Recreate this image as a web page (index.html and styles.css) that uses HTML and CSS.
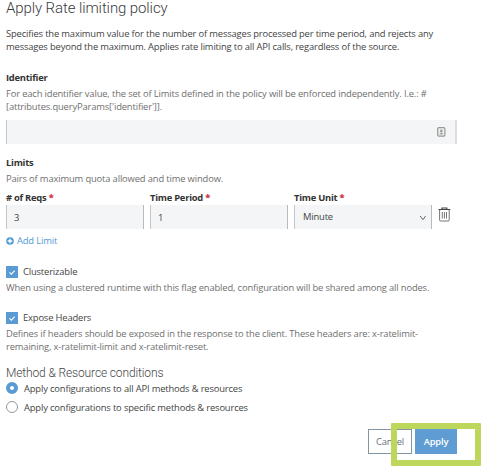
FILE: index.html
```html
<!DOCTYPE html>
<html lang="en">
<head>
<meta charset="utf-8">
<title>Apply Rate limiting policy</title>
<link rel="stylesheet" href="styles.css">
</head>
<body>
<main class="policy">
  <h1 class="title"><span>Apply Rate limiting policy</span></h1>
  <p class="intro">Specifies the maximum value for the number of messages processed per time period, and rejects any<br>messages beyond the maximum. Applies rate limiting to all API calls, regardless of the source.</p>

  <section class="identifier">
    <h2 class="label">Identifier</h2>
    <p class="help">For each identifier value, the set of Limits defined in the policy will be enforced independently. I.e.: #<br>[attributes.queryParams['identifier']].</p>
    <div class="field field-wide">
      <svg class="autofill" viewBox="0 0 9 10"><rect x=".7" y=".7" width="7.2" height="8.4" rx="1" fill="#eee" stroke="#999" stroke-width="1.2"/><path d="M4.3 2.5v3M3 4h2.6M2.7 6.8h3.2" stroke="#888" fill="none"/></svg>
    </div>
  </section>

  <section class="limits">
    <h2 class="label">Limits</h2>
    <p class="help">Pairs of maximum quota allowed and time window.</p>
    <div class="columns">
      <div class="column"><div class="label"># of Reqs <b class="required">*</b></div><div class="field">3</div></div>
      <div class="column"><div class="label">Time Period <b class="required">*</b></div><div class="field">1</div></div>
      <div class="column"><div class="label">Time Unit <b class="required">*</b></div><div class="field select">Minute<svg class="chevron" viewBox="0 0 8 6"><path d="M1.2 1l2.7 3.7L6.6 1" fill="none" stroke="#666" stroke-width="1"/></svg></div></div>
      <svg class="trash" viewBox="0 0 13 16"><path d="M.5 2.5h11.8M4 2V1h4.8v1" fill="none" stroke="#444" stroke-width="1.2"/><path d="M1.6 3v10.1q0 .9.9.9h7.8q.9 0 .9-.9V3M4.3 5v6.5M6.4 5v6.5M8.5 5v6.5" fill="none" stroke="#666" stroke-width=".9"/></svg>
    </div>
    <div class="add"><svg class="plus" viewBox="0 0 8 8"><circle cx="4" cy="4" r="3.8" fill="#4f9bd5"/><path d="M4 1.7v4.6M1.7 4h4.6" stroke="#fff" stroke-width="1.4"/></svg><span>Add Limit</span></div>
  </section>

  <section class="option clusterizable">
    <div class="check"><svg class="box" viewBox="0 0 12 12"><path d="M3.5 6.4l1.8 1.8 3.4-3.5" fill="none" stroke="#fff" stroke-width="1.1"/></svg><span>Clusterizable</span></div>
    <p class="help">When using a clustered runtime with this flag enabled, configuration will be shared among all nodes.</p>
  </section>

  <section class="option expose">
    <div class="check"><svg class="box" viewBox="0 0 12 12"><path d="M3.5 6.4l1.8 1.8 3.4-3.5" fill="none" stroke="#fff" stroke-width="1.1"/></svg><span>Expose Headers</span></div>
    <p class="help">Defines if headers should be exposed in the response to the client. These headers are: x-ratelimit-<br>remaining, x-ratelimit-limit and x-ratelimit-reset.</p>
  </section>

  <section class="conditions">
    <h2 class="subtitle"><span>Method &amp; Resource conditions</span></h2>
    <div class="choice"><i class="radio selected"></i><span>Apply configurations to all API methods &amp; resources</span></div>
    <div class="choice"><i class="radio"></i><span>Apply configurations to specific methods &amp; resources</span></div>
  </section>

  <footer class="actions">
    <div class="button cancel">Cancel</div>
    <div class="button apply">Apply</div>
    <div class="highlight"></div>
  </footer>
</main>
</body>
</html>
```
FILE: styles.css
```css
* { box-sizing: border-box; }
body { margin: 0; background: #fff; overflow: hidden; }
svg { display: block; flex: none; }
h1, h2, p { margin: 0; }
.policy {
  width: 482px;
  height: 466px;
  padding-left: 6px;
  overflow: hidden;
  font: 9.4px/13px "Open Sans", sans-serif;
  letter-spacing: -0.155px;
  color: #444;
  white-space: nowrap;
}
.title {
  height: 16px;
  font: 300 15px/16px Roboto, sans-serif;
  letter-spacing: -0.1px;
  color: #3a3a3a;
}
.intro { margin-top: 11px; }
.identifier { margin-top: 18px; }
.label { font: 700 9.4px/13px "Open Sans", sans-serif; letter-spacing: -0.25px; color: #333; }
.help { color: #707070; letter-spacing: -0.147px; }
.identifier .help { margin-top: 3px; }
.field {
  display: flex;
  align-items: center;
  height: 24px;
  padding: 0 7px;
  background: #f4f5f7;
  border-left: 1px solid #c4c6c8;
  border-right: 1px solid #b8babc;
}
.field-wide {
  width: 451px;
  margin-top: 7px;
  padding-right: 9px;
  justify-content: flex-end;
  border-right: 2px solid #ddd;
}
.autofill { width: 9px; height: 10px; }
.limits { margin-top: 12px; }
.limits .help { margin-top: 3px; }
.columns { display: flex; gap: 6px; margin-top: 6px; }
.column { width: 138px; }
.column .field { margin-top: 1px; }
.required { color: #d0364b; }
.select { justify-content: space-between; padding: 0 4px 2px 8px; }
.chevron { width: 8px; height: 6px; margin-top: 4px; }
.trash { width: 13px; height: 16px; margin-top: 16px; }
.add {
  display: flex;
  align-items: center;
  gap: 3px;
  margin-top: 5px;
  color: #4f9bd5;
}
.plus { width: 8px; height: 8px; }
.clusterizable { margin-top: 18px; }
.expose { margin-top: 17px; }
.check { display: flex; align-items: center; gap: 5px; height: 13px; }
.box { width: 12px; height: 12px; background: #5b9bd3; }
.option .help { margin-top: 3px; }
.conditions { margin-top: 13px; }
.subtitle {
  height: 14px;
  font: 300 12px/14px Roboto, sans-serif;
  letter-spacing: -0.13px;
  color: #444;
}
.choice { display: flex; align-items: center; gap: 6px; height: 12px; margin-top: 2px; }
.choice + .choice { margin-top: 7px; }
.radio {
  width: 12px;
  height: 12px;
  border: 1px solid #999;
  border-radius: 50%;
}
.selected { border: 4px solid #5b9bd3; }
.actions {
  position: relative;
  display: flex;
  gap: 3px;
  margin-top: 16px;
  padding-left: 362px;
}
.button {
  height: 25px;
  line-height: 23px;
  text-align: center;
  border: 1px solid #8494a0;
}
.cancel { width: 44px; color: #66717b; }
.apply { width: 42px; color: #fff; font-weight: 600; background: #5f9cd3; border-color: #5f9cd3; }
.highlight {
  position: absolute;
  left: 385px;
  top: -6px;
  width: 90px;
  height: 43px;
  border: 6px solid #bdd75d;
  border-radius: 1px;
}
```
